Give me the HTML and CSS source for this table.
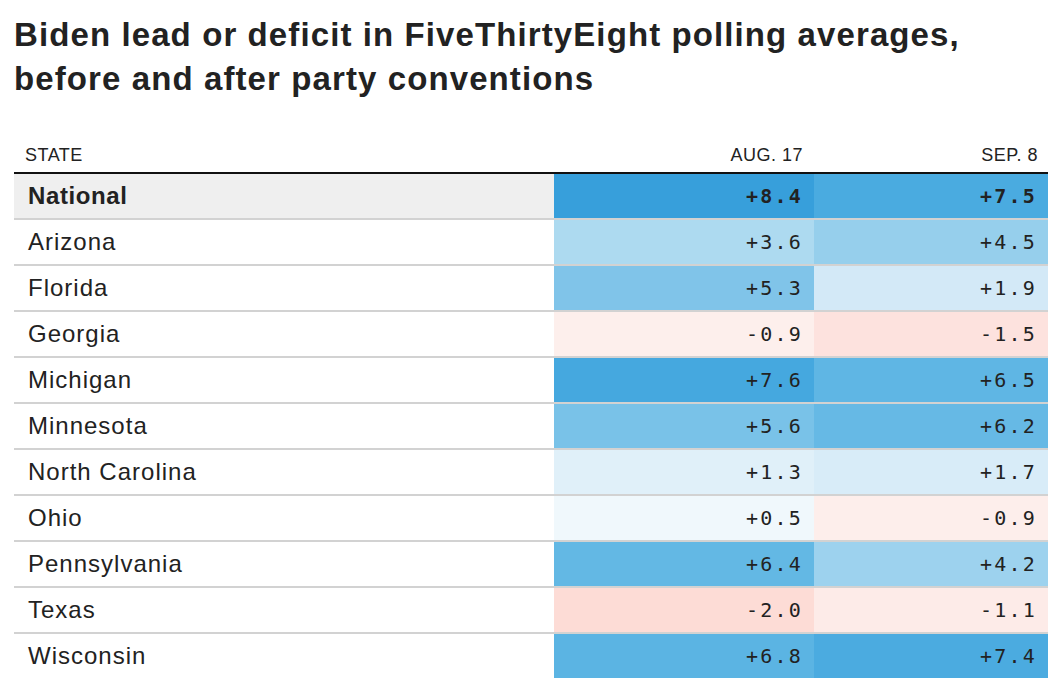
FILE: index.html
```html
<!DOCTYPE html>
<html>
<head>
<meta charset="utf-8">
<link rel="stylesheet" href="styles.css">
</head>
<body>
<div class="wrap">
  <h1 class="title">Biden lead or deficit in FiveThirtyEight polling averages,<br>before and after party conventions</h1>
  <table class="tbl">
    <thead>
      <tr><th class="c-state">STATE</th><th class="c-num c-aug">AUG. 17</th><th class="c-num c-sep">SEP. 8</th></tr>
    </thead>
    <tbody>
      <tr class="nat"><td class="c-state">National</td><td class="c-num" style="background:#379fdb">+8.4</td><td class="c-num" style="background:#4aabe0">+7.5</td></tr>
      <tr><td class="c-state">Arizona</td><td class="c-num" style="background:#addaf0">+3.6</td><td class="c-num" style="background:#96cfec">+4.5</td></tr>
      <tr><td class="c-state">Florida</td><td class="c-num" style="background:#80c4e9">+5.3</td><td class="c-num" style="background:#d3e9f7">+1.9</td></tr>
      <tr><td class="c-state">Georgia</td><td class="c-num" style="background:#fdefec">-0.9</td><td class="c-num" style="background:#fde2de">-1.5</td></tr>
      <tr><td class="c-state">Michigan</td><td class="c-num" style="background:#45a8df">+7.6</td><td class="c-num" style="background:#5fb6e4">+6.5</td></tr>
      <tr><td class="c-state">Minnesota</td><td class="c-num" style="background:#79c2e8">+5.6</td><td class="c-num" style="background:#66b9e5">+6.2</td></tr>
      <tr><td class="c-state">North Carolina</td><td class="c-num" style="background:#e0f0f9">+1.3</td><td class="c-num" style="background:#d8ecf8">+1.7</td></tr>
      <tr><td class="c-state">Ohio</td><td class="c-num" style="background:#f0f8fc">+0.5</td><td class="c-num" style="background:#fdeeeb">-0.9</td></tr>
      <tr><td class="c-state">Pennsylvania</td><td class="c-num" style="background:#63b8e4">+6.4</td><td class="c-num" style="background:#9dd2ee">+4.2</td></tr>
      <tr><td class="c-state">Texas</td><td class="c-num" style="background:#fddcd6">-2.0</td><td class="c-num" style="background:#fdebe8">-1.1</td></tr>
      <tr class="last"><td class="c-state">Wisconsin</td><td class="c-num" style="background:#5bb4e3">+6.8</td><td class="c-num" style="background:#4babe0">+7.4</td></tr>
    </tbody>
  </table>
</div>
</body>
</html>
```
FILE: styles.css
```css
html, body {
  margin: 0;
  padding: 0;
  background: #ffffff;
}
.wrap {
  padding: 13px 6px 0 14px;
  color: #222222;
  font-family: "Liberation Sans", Arial, sans-serif;
}
.title {
  margin: 0;
  font-family: "Liberation Sans", Arial, sans-serif;
  font-weight: 700;
  font-size: 33px;
  line-height: 44px;
  letter-spacing: 1.1px;
  color: #222222;
  white-space: nowrap;
}
.tbl {
  margin-top: 45px;
  width: 1034px;
  border-collapse: collapse;
  table-layout: fixed;
}
.tbl th {
  font-weight: 400;
  font-size: 18px;
  line-height: 18px;
  letter-spacing: 0.5px;
  text-transform: uppercase;
  padding: 0 0 8px 0;
  vertical-align: bottom;
  border-bottom: 2px solid #111111;
  color: #222222;
}
.tbl th.c-state {
  text-align: left;
  padding-left: 11px;
  width: 529px;
}
.tbl th.c-aug {
  width: 249px;
  text-align: right;
  padding-right: 11px;
}
.tbl th.c-sep {
  text-align: right;
  padding-right: 10px;
}
.tbl td {
  height: 44px;
  padding: 0;
  border-bottom: 2px solid #d2d2d2;
  vertical-align: middle;
}
.tbl tr.last td {
  border-bottom: none;
}
.tbl td.c-state {
  font-size: 24px;
  letter-spacing: 1px;
  padding-left: 14px;
  color: #222222;
}
.tbl td.c-num {
  text-align: right;
  font-family: "DejaVu Sans Mono", "Liberation Mono", monospace;
  font-size: 20px;
  letter-spacing: 2.2px;
  padding-right: 11px;
  color: #222222;
}
.tbl tr.nat td {
  font-weight: 700;
}
.tbl tr.nat td.c-state {
  background: #efefef;
  letter-spacing: 0.6px;
}
```
